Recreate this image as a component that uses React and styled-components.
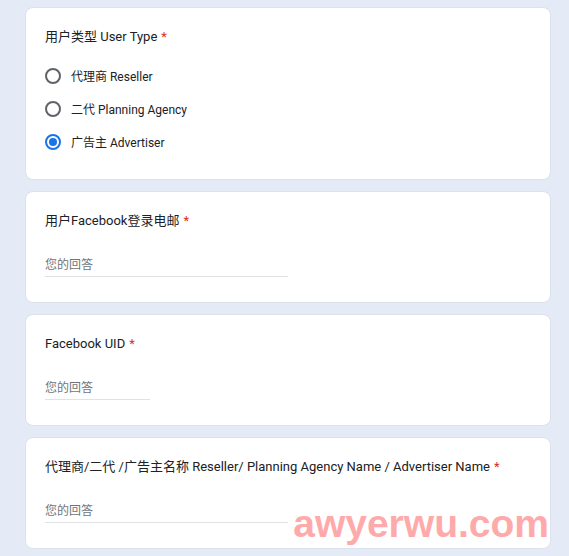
import React from 'react';
import styled, { createGlobalStyle } from 'styled-components';

const GlobalStyle = createGlobalStyle`
	body {
		margin: 0;
		background: #e4eaf6;
		font-family: Roboto, 'Noto Sans CJK SC', sans-serif;
	}
`;

const Page = styled.div`
	display: flex;
	flex-direction: column;
	gap: 11px;
	width: 526px;
	padding: 7px 0 0 25px;
`;

const Card = styled.div`
	position: relative;
	background: #fff;
	border: 1px solid #dde2ea;
	border-radius: 8px;
	padding: 20px 19px 0;
	box-sizing: border-box;
	height: ${({ $height }) => $height}px;
`;

const Title = styled.div`
	font-size: 13px;
	line-height: 18px;
	color: #202124;
	white-space: nowrap;
`;

const Required = styled.span`
	color: #d93025;
	margin-left: 4px;
`;

const Options = styled.div`
	display: flex;
	flex-direction: column;
	margin-top: 13px;
`;

const Option = styled.label`
	display: flex;
	align-items: center;
	gap: 10px;
	height: 33px;
	font-size: 12px;
	color: #202124;
`;

const Radio = styled.span`
	display: flex;
	align-items: center;
	justify-content: center;
	width: 16px;
	height: 16px;
	box-sizing: border-box;
	border-radius: 50%;
	border: 2px solid ${({ $checked }) => ($checked ? '#1a73e8' : '#5f6368')};

	&::after {
		content: '';
		display: ${({ $checked }) => ($checked ? 'block' : 'none')};
		width: 8px;
		height: 8px;
		border-radius: 50%;
		background: #1a73e8;
	}
`;

const Answer = styled.div`
	width: ${({ $width }) => $width}px;
	height: 20px;
	margin-top: 26px;
	border-bottom: 1px solid #e0e2e6;
	font-size: 12px;
	line-height: 18px;
	color: #70757a;
`;

const Watermark = styled.div`
	position: absolute;
	right: 1px;
	top: 66px;
	font-family: 'Liberation Sans', sans-serif;
	font-weight: 700;
	font-size: 39px;
	line-height: 39px;
	color: #ffaaaa;
	pointer-events: none;
`;

const options = [
	{ label: '代理商 Reseller', checked: false },
	{ label: '二代 Planning Agency', checked: false },
	{ label: '广告主 Advertiser', checked: true },
];

const TextQuestion = ({ title, width, children }) => (
	<Card $height={112}>
		<Title>
			{title}
			<Required>*</Required>
		</Title>
		<Answer $width={width}>您的回答</Answer>
		{children}
	</Card>
);

const App = () => {
	return (
		<>
			<GlobalStyle />
			<Page>
				<Card $height={173}>
					<Title>
						用户类型 User Type
						<Required>*</Required>
					</Title>
					<Options>
						{options.map((o) => (
							<Option key={o.label}>
								<Radio $checked={o.checked} />
								{o.label}
							</Option>
						))}
					</Options>
				</Card>
				<TextQuestion title='用户Facebook登录电邮' width={243} />
				<TextQuestion title='Facebook UID' width={105} />
				<TextQuestion
					title='代理商/二代 /广告主名称 Reseller/ Planning Agency Name / Advertiser Name'
					width={243}>
					<Watermark>awyerwu.com</Watermark>
				</TextQuestion>
			</Page>
		</>
	);
};

export default App;
